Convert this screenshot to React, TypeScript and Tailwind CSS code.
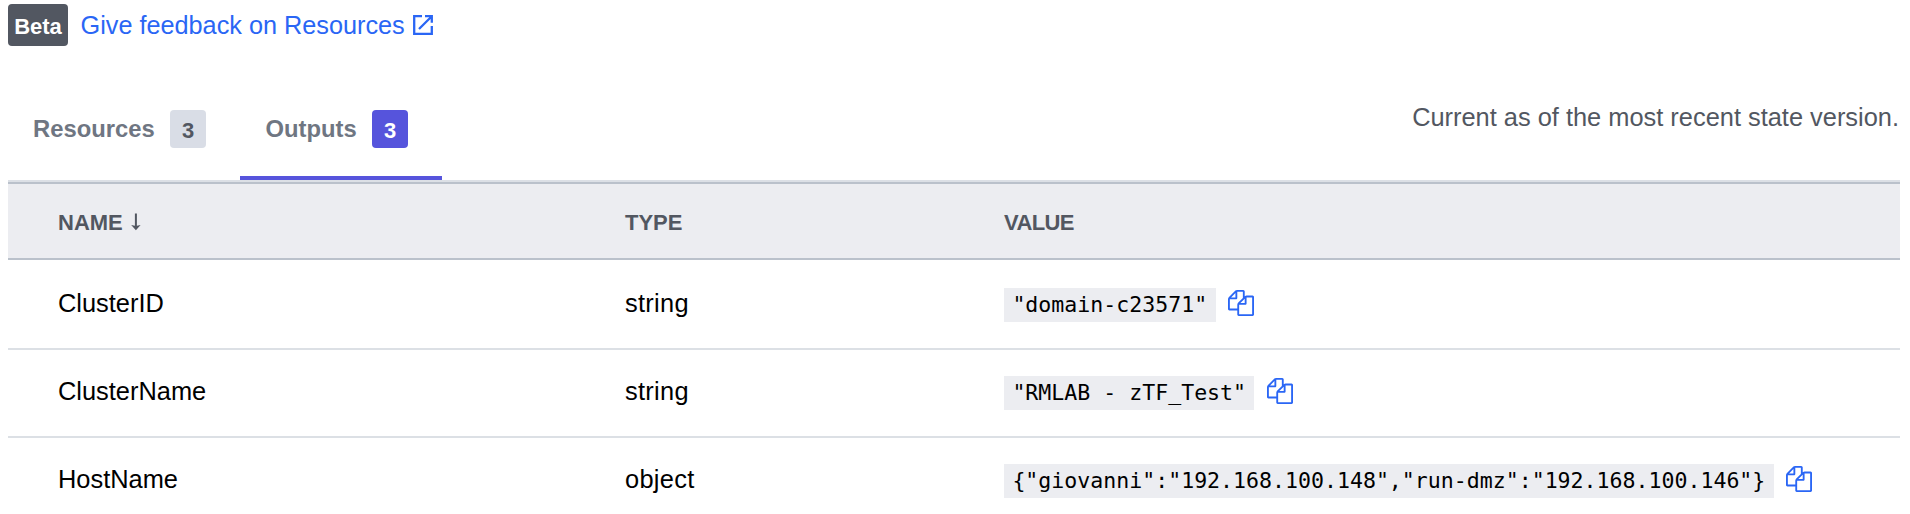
type Output = { name: string; type: string; value: string };

const outputs: Output[] = [
  { name: "ClusterID", type: "string", value: '"domain-c23571"' },
  { name: "ClusterName", type: "string", value: '"RMLAB - zTF_Test"' },
  { name: "HostName", type: "object", value: '{"giovanni":"192.168.100.148","run-dmz":"192.168.100.146"}' },
];

function ExternalIcon() {
  return (
    <svg className="mt-[-2px] ml-[8px] h-5 w-5 shrink-0" viewBox="0 0 20 20" fill="none" stroke="currentColor" strokeWidth="2.3">
      <path d="M9 1.2H1.2v17.6h17.6V11M12 1.2h6.8v6.6M18.8 1.2L6 14" />
    </svg>
  );
}

function CopyIcon() {
  return (
    <svg className="mt-[-4px] h-[26px] w-[26px] shrink-0 text-[#2a66f5]" viewBox="0 0 1792 1792" fill="currentColor">
      <path d="M1696 384q40 0 68 28t28 68v1216q0 40-28 68t-68 28h-960q-40 0-68-28t-28-68v-288h-544q-40 0-68-28t-28-68v-672q0-40 20-88t48-76l408-408q28-28 76-48t88-20h416q40 0 68 28t28 68v328q68-40 128-40h416zm-544 213l-299 299h299v-299zm-640-384l-299 299h299v-299zm196 647l316-316v-416h-384v416q0 40-28 68t-68 28h-416v640h512v-256q0-40 20-88t48-76zm956 804v-1152h-384v416q0 40-28 68t-68 28h-416v640h896z" />
    </svg>
  );
}

function SortArrow() {
  return (
    <svg className="ml-[8.5px] h-[18px] w-[10px]" viewBox="0 0 10 18">
      <path d="M3.9 0.5h2v12.2L9.6 12L4.9 17.3L.2 12L3.9 12.7z" fill="currentColor" />
    </svg>
  );
}

export default function App() {
  return (
    <div className="flex h-[514px] flex-col overflow-hidden bg-white pr-[10px] pl-2 font-['Liberation_Sans',Arial,sans-serif] text-[25.4px] text-black">
      <div className="flex shrink-0 items-center pt-1">
        <span className="flex h-[42px] w-[60px] shrink-0 items-center justify-center rounded-[4px] bg-[#525761] pt-[3px] text-[22px] font-bold text-white">
          Beta
        </span>
        <a href="#" className="ml-[12.5px] flex h-[42px] items-center pt-[2px] text-[25.25px] whitespace-nowrap text-[#2a66f5]">
          <span>Give feedback on Resources</span>
          <ExternalIcon />
        </a>
      </div>

      <div className="mt-[34px] flex h-[102px] shrink-0 justify-between border-b-2 border-[#dce0e6]">
        <nav className="flex text-2xl font-bold text-[#6f7682]">
          <a href="#" className="flex w-[232px] items-center pb-[2px] pl-[25px]">
            <span className="w-[137px] text-[23.8px]">Resources</span>
            <span className="flex h-[38px] w-9 items-center justify-center rounded-[4px] bg-[#d9dde6] pt-[3px] text-[22px] text-[#525761]">3</span>
          </a>
          <a href="#" className="flex w-[202px] items-center border-b-4 border-[#5654dc] pt-[2px] pl-[25.5px]">
            <span className="w-[106.5px] text-[23.8px]">Outputs</span>
            <span className="flex h-[38px] w-9 items-center justify-center rounded-[4px] bg-[#5654dc] pt-[3px] text-[22px] text-white">3</span>
          </a>
        </nav>
        <p className="pt-[18px] pr-[1px] text-[#525761]">Current as of the most recent state version.</p>
      </div>

      <div className="grid h-[78px] shrink-0 grid-cols-[567px_378px_1fr] items-center border-y-2 border-[#bac1cb] bg-[#ecedf1] pt-[2px] pl-[50px] text-[22px] font-bold text-[#525761]">
        <span className="flex items-center">
          NAME
          <SortArrow />
        </span>
        <span>TYPE</span>
        <span className="pl-px tracking-[-0.6px]">VALUE</span>
      </div>

      <div className="shrink-0 pt-[2px]">
        {outputs.map((o) => (
          <div key={o.name} className="grid h-[88px] grid-cols-[567px_379px_1fr] items-center border-b-2 border-[#dce0e5] pl-[50px]">
            <span className="pb-[3px]">{o.name}</span>
            <span className="pb-[3px] tracking-[0.3px]">{o.type}</span>
            <span className="flex items-center gap-[12.4px]">
              <code className="flex h-[34px] items-center bg-[#ecedf1] px-[8.4px] font-['DejaVu_Sans_Mono',monospace] text-[21.57px] whitespace-pre">
                {o.value}
              </code>
              <CopyIcon />
            </span>
          </div>
        ))}
      </div>
    </div>
  );
}
